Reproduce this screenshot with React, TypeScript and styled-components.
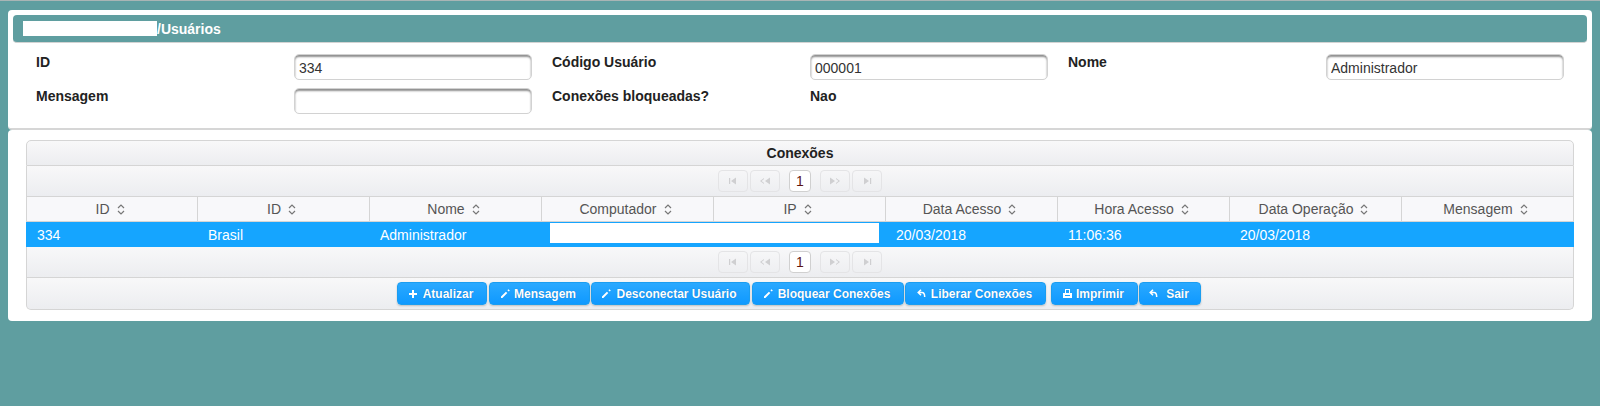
import * as React from 'react'
import styled, { createGlobalStyle } from 'styled-components'

const GlobalStyle = createGlobalStyle`
  html, body {
    margin: 0;
    min-height: 406px;
    background: #5f9ea0;
    font-family: "Liberation Sans", Arial, sans-serif;
    font-size: 14px;
    color: #222;
  }
`

const Page = styled.div`
  height: 406px;
  box-sizing: border-box;
  border-top: 1px solid #a9b5b5;
  padding: 9px 8px 0;
`

const FormPanel = styled.section`
  height: 120px;
  box-sizing: border-box;
  padding: 5px 5px 0;
  background: #fff;
  border-radius: 4px;
  border-bottom: 2px solid #d6d6d6;
`

const TitleBar = styled.h1`
  display: flex;
  align-items: center;
  height: 28px;
  box-sizing: border-box;
  margin: 0;
  padding: 0 10px;
  background: #5f9ea0;
  border-bottom: 1px solid #d3d3d3;
  border-radius: 4px;
  color: #fff;
  font-size: 14px;
  font-weight: bold;
`

const Redacted = styled.span`
  display: block;
  width: 134px;
  height: 15px;
  background: #fff;
`

const FormGrid = styled.div`
  display: grid;
  grid-template-columns: repeat(3, 258px 258px);
  grid-auto-rows: 34px;
  padding: 11px 0 0 23px;
`

const FieldLabel = styled.label`
  font-weight: bold;
  line-height: 16px;
`

const TextInput = styled.input`
  width: 238px;
  height: 26px;
  box-sizing: border-box;
  padding: 1px 4px 0;
  border: 1px solid #d2d2d2;
  border-radius: 5px;
  box-shadow: inset 0 2px 2px #8f8f8f;
  background: #fff;
  color: #333;
  font-family: inherit;
  font-size: 14px;
  outline: none;
`

const TablePanel = styled.section`
  height: 191px;
  box-sizing: border-box;
  padding: 10px 18px 0;
  background: #fff;
  border-radius: 4px;
`

const Band = styled.div<{ $height: number }>`
  display: flex;
  align-items: center;
  justify-content: center;
  height: ${p => p.$height}px;
  box-sizing: border-box;
  background: linear-gradient(#f8f8f9, #ecedf0);
  border: 1px solid #d5d5d5;
  border-top: 0;

  &:first-child {
    border-top: 1px solid #d5d5d5;
    border-radius: 5px 5px 0 0;
  }

  &:last-child {
    border-radius: 0 0 5px 5px;
  }
`

const WidgetTitle = styled.h2`
  margin: 0;
  font-size: 14px;
  font-weight: bold;
  color: #222;
`

const PageButton = styled.span<{ $gap?: number }>`
  display: flex;
  align-items: center;
  justify-content: center;
  width: 30px;
  height: 22px;
  box-sizing: border-box;
  margin-left: ${p => p.$gap ?? 0}px;
  border: 1px solid #e4e4e6;
  border-radius: 4px;
  color: #cfcfd1;
`

const CurrentPage = styled.span`
  display: flex;
  align-items: center;
  justify-content: center;
  width: 22px;
  height: 22px;
  box-sizing: border-box;
  margin: 0 9px;
  background: #fff;
  border: 1px solid #d0d0d0;
  border-radius: 4px;
  color: #5e1512;
  font-size: 14px;
`

const Columns = styled.div`
  display: grid;
  grid-template-columns: repeat(9, 1fr);
`

const HeaderCell = styled.div`
  display: flex;
  align-items: center;
  justify-content: center;
  gap: 7px;
  height: 25px;
  box-sizing: border-box;
  padding-right: 4px;
  background: #f8f8fa;
  border-right: 1px solid #d5d5d5;
  border-bottom: 1px solid #d5d5d5;
  color: #555;

  &:first-child {
    border-left: 1px solid #d5d5d5;
  }
`

const Row = styled(Columns)`
  height: 25px;
  background: #15a5ff;
  color: #fff;
`

const Cell = styled.div`
  display: flex;
  align-items: center;
  padding-left: 10px;

  &:first-child {
    padding-left: 11px;
  }
`

const WideCell = styled.div`
  grid-column: span 2;
  padding: 1px 7px 0 8px;
`

const RedactedBlock = styled.div`
  height: 20px;
  background: #fff;
`

const ActionBar = styled(Band)`
  gap: 1px;
  padding-right: 3px;
`

const ActionButton = styled.button<{ $width: number; $gap?: number; $iconGap?: number }>`
  display: flex;
  align-items: center;
  justify-content: center;
  gap: ${p => p.$iconGap ?? 5}px;
  width: ${p => p.$width}px;
  height: 23px;
  box-sizing: border-box;
  margin-left: ${p => p.$gap ?? 0}px;
  padding: 0 1px 0 0;
  background: linear-gradient(#2aa9ff, #0f99ff);
  border: 1px solid #1b9df0;
  border-radius: 4px;
  box-shadow: 0 1px 2px rgba(0, 0, 0, 0.2);
  color: #fff;
  font-family: inherit;
  font-size: 12px;
  font-weight: bold;
  text-shadow: 0 0 1px rgba(0, 60, 120, 0.5);
`

const SortIcon = () => (
  <svg width="8" height="11" viewBox="0 0 8 11" fill="none" stroke="#777" strokeWidth="1.200">
    <path d="M1 4 4 1l3 3M1 7l3 3 3-3" />
  </svg>
)

const SeekIcon = ({ kind }: { kind: 'first' | 'prev' | 'next' | 'end' }) => {
  const paths = {
    first: 'M2 2h1.200v6H2zM4 5l5-3.500v7z',
    prev: 'M1 5l4-3v1L2.600 5 5 7v1zM6 5l5-3.500v7z',
    next: 'M1 1.500 6 5l-5 3.500zM7 2l4 3-4 3V7l2.400-2L7 3z',
    end: 'M3 1.500 8 5l-5 3.500zM9 2h1.200v6H9z',
  }
  return (
    <svg width="12" height="10" viewBox="0 0 12 10" fill="currentColor">
      <path d={paths[kind]} />
    </svg>
  )
}

const Pager = () => (
  <>
    <PageButton><SeekIcon kind="first" /></PageButton>
    <PageButton $gap={2}><SeekIcon kind="prev" /></PageButton>
    <CurrentPage>1</CurrentPage>
    <PageButton><SeekIcon kind="next" /></PageButton>
    <PageButton $gap={2}><SeekIcon kind="end" /></PageButton>
  </>
)

const PlusIcon = () => (
  <svg width="8" height="8" viewBox="0 0 8 8" fill="#fff">
    <path d="M3 0h2v3h3v2H5v3H3V5H0V3h3z" />
  </svg>
)

const PencilIcon = () => (
  <svg width="9" height="9" viewBox="0 0 9 9" fill="#fff">
    <path d="M0 9V7.600L4.900 2.700l1.400 1.400L1.400 9zM6.400 1.200 7.400.2l1.400 1.400-1 1z" />
  </svg>
)

const ReturnIcon = () => (
  <svg width="9" height="9" viewBox="0 0 9 9" fill="none" stroke="#fff" strokeWidth="1.500">
    <path d="M4 .8 1.200 3.500 4 6.200M1.500 3.500h3.500c2 0 2.700 1.500 2.700 4.500" />
  </svg>
)

const PrintIcon = () => (
  <svg width="9" height="9" viewBox="0 0 9 9" fill="#fff">
    <path d="M2 0h5v4h2v5H0V4h2zM3 1v3h3V1zM2 6v1h5V6z" fillRule="evenodd" />
  </svg>
)

const headers = ['ID', 'ID', 'Nome', 'Computador', 'IP', 'Data Acesso', 'Hora Acesso', 'Data Operação', 'Mensagem']

const App = () => (
  <Page>
    <GlobalStyle />
    <FormPanel>
      <TitleBar><Redacted />/Usuários</TitleBar>
      <FormGrid>
        <FieldLabel>ID</FieldLabel>
        <TextInput readOnly value="334" />
        <FieldLabel>Código Usuário</FieldLabel>
        <TextInput readOnly value="000001" />
        <FieldLabel>Nome</FieldLabel>
        <TextInput readOnly value="Administrador" />
        <FieldLabel>Mensagem</FieldLabel>
        <TextInput readOnly value="" />
        <FieldLabel>Conexões bloqueadas?</FieldLabel>
        <FieldLabel>Nao</FieldLabel>
      </FormGrid>
    </FormPanel>
    <TablePanel>
      <div>
        <Band $height={26}><WidgetTitle>Conexões</WidgetTitle></Band>
        <Band $height={31}><Pager /></Band>
        <Columns>
          {headers.map((h, i) => (
            <HeaderCell key={i}>{h}<SortIcon /></HeaderCell>
          ))}
        </Columns>
        <Row>
          <Cell>334</Cell>
          <Cell>Brasil</Cell>
          <Cell>Administrador</Cell>
          <WideCell><RedactedBlock /></WideCell>
          <Cell>20/03/2018</Cell>
          <Cell>11:06:36</Cell>
          <Cell>20/03/2018</Cell>
          <Cell />
        </Row>
        <Band $height={31}><Pager /></Band>
        <ActionBar $height={32}>
          <ActionButton $width={90} $iconGap={6}><PlusIcon />Atualizar</ActionButton>
          <ActionButton $width={101} $gap={1} $iconGap={4}><PencilIcon />Mensagem</ActionButton>
          <ActionButton $width={159}><PencilIcon />Desconectar Usuário</ActionButton>
          <ActionButton $width={152} $gap={1}><PencilIcon />Bloquear Conexões</ActionButton>
          <ActionButton $width={141} $iconGap={5}><ReturnIcon />Liberar Conexões</ActionButton>
          <ActionButton $width={87} $gap={4} $iconGap={4}><PrintIcon />Imprimir</ActionButton>
          <ActionButton $width={62} $iconGap={8}><ReturnIcon />Sair</ActionButton>
        </ActionBar>
      </div>
    </TablePanel>
  </Page>
)

export default App
